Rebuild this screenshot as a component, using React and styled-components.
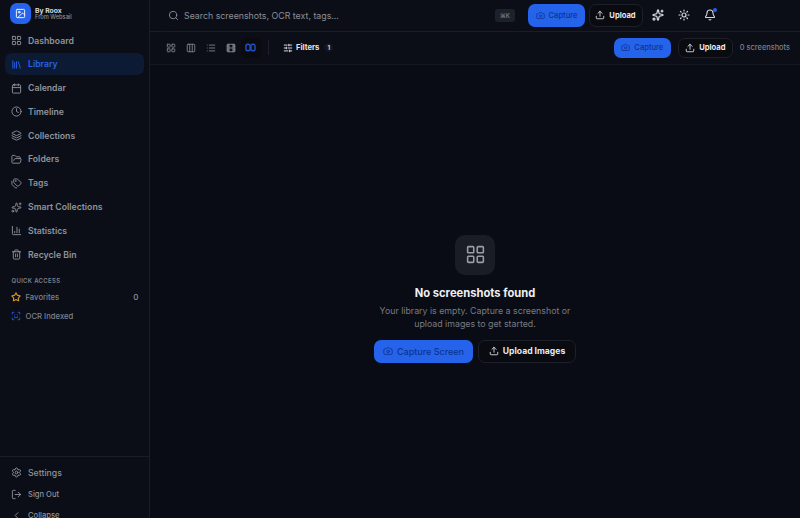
import React from "react";
import styled, { createGlobalStyle } from "styled-components";
import {
  LayoutGrid, Library, Calendar, Clock, Layers, FolderOpen, Tags, Sparkles, ChartColumn, Trash2,
  Star, ScanFace, Settings, LogOut, ChevronLeft, Search, Camera, Upload, Sun, Bell, Columns3,
  List, Film, SlidersHorizontal, Image as ImageIcon,
} from "lucide-react";

const Global = createGlobalStyle`
  html, body { margin: 0; padding: 0; height: 100%; background: #090c14; }
  #root { height: 100%; }
  * { box-sizing: border-box; }
`;

const Shell = styled.div`
  width: 800px; height: 518px; display: flex; overflow: hidden;
  background: #090c14; color: #fff;
  font-family: Inter, "Liberation Sans", sans-serif;
`;
const Sidebar = styled.aside`
  width: 150px; flex: none; height: 518px; display: flex; flex-direction: column;
  background: #0b0e17; border-right: 1px solid #1a1d26; overflow: hidden;
`;
const Brand = styled.div`
  height: 27px; flex: none; display: flex; align-items: center; gap: 4px; padding: 0 10px;
`;
const Logo = styled.div`
  width: 21px; height: 21px; border-radius: 7px; background: #2563eb; display: flex;
  align-items: center; justify-content: center; color: #fff;
`;
const BrandText = styled.div`display: flex; flex-direction: column;`;
const BrandName = styled.div`font-size: 6.8px; font-weight: 700; line-height: 7.5px; color: #d8dade;`;
const BrandSub = styled.div`font-size: 5.7px; font-weight: 500; line-height: 6.5px; color: #8b8f98;`;
const Nav = styled.nav`display: flex; flex-direction: column; gap: 1.8px; padding: 0 5px; margin-top: 2.5px;`;
const NavItem = styled.div`
  height: 22px; display: flex; align-items: center; gap: 6px; padding: 0 6px; border-radius: 7px;
  font-size: 8.7px; font-weight: 600; color: ${p => p.$active ? "#2563eb" : "#8f939c"};
  background: ${p => p.$active ? "#0d1a33" : "transparent"};
`;
const QuickTitle = styled.div`
  font-size: 6px; font-weight: 600; letter-spacing: .3px; color: #7d818b;
  padding: 0 11.5px; margin-top: 11px; margin-bottom: 3px; line-height: 8px;
`;
const QuickItem = styled.div`
  height: 19px; display: flex; align-items: center; gap: 5px; padding: 0 10.5px;
  font-size: 7.7px; font-weight: 500; color: #7d818b;
`;
const Count = styled.span`margin-left: auto; color: #8f939c; font-size: 8px;`;
const Spacer = styled.div`flex: 1;`;
const Footer = styled.div`
  flex: none; height: 62px; border-top: 1px solid #1a1d26; padding: 5px 5px 0; display: flex; flex-direction: column;
`;
const FootItem = styled.div`
  height: 21.5px; flex: none; display: flex; align-items: center; gap: 6px; padding: 0 6px;
  font-size: ${p => p.$small ? "7.6px" : "8.7px"}; font-weight: 500; color: #8f939c;
`;
const Main = styled.main`flex: 1; min-width: 0; display: flex; flex-direction: column;`;
const Header = styled.header`
  height: 31.5px; flex: none; display: flex; align-items: center; padding: 0 12px;
  background: #0b0e17; border-bottom: 1px solid #1a1d26;
`;
const SearchBox = styled.div`
  width: 358px; height: 26px; flex: none; display: flex; align-items: center; gap: 5px; padding: 0 5px 0 6px;
  background: #0b0e17; border-radius: 8px; color: #8a8e97; font-size: 8.8px;
`;
const Kbd = styled.span`
  margin-left: auto; width: 20px; height: 13px; border-radius: 3px; background: #1e2129; color: #71757f;
  font-size: 6px; font-weight: 600; display: flex; align-items: center; justify-content: center;
`;
const Btn = styled.button`
  height: ${p => p.$big ? "22.5px" : "20.5px"}; padding: 0; display: inline-flex; align-items: center; justify-content: center; gap: 4px;
  width: ${p => p.$w}px; flex: none; border-radius: 7px; font-family: inherit;
  font-size: ${p => p.$big ? (p.$primary ? "9px" : "8.6px") : "7.6px"};
  font-weight: ${p => p.$primary ? 500 : 700};
  background: ${p => p.$primary ? "#2563eb" : "#090b11"};
  color: ${p => p.$primary ? "#0d3491" : "#e8eaee"};
  border: ${p => p.$primary ? "none" : "1px solid #1d2028"};
`;
const TopActions = styled.div`display: flex; align-items: center; gap: 3.5px; margin-left: 8px;`;
const TopCapture = styled(Btn)`height: 23px;`;
const TopUpload = styled(Btn)`height: 23px;`;
const IconBtn = styled.div`
  width: 22px; height: 22px; margin-left: 0.5px; position: relative; display: flex; align-items: center; justify-content: center; color: #d3d5da;
`;
const Dot = styled.span`
  position: absolute; top: 3.5px; right: 4px; width: 4px; height: 4px; border-radius: 50%; background: #2563eb;
`;
const Toolbar = styled.div`
  height: 33.5px; flex: none; display: flex; align-items: center; padding: 0 10px 0 10.5px;
  background: #0b0e17; border-bottom: 1px solid #14171f;
`;
const ViewBtn = styled.div`
  width: 20px; height: 20px; flex: none; border-radius: 5px; display: flex; align-items: center; justify-content: center;
  color: ${p => p.$active ? "#2450c8" : "#7d818b"};
  background: ${p => p.$active ? "#090b11" : "transparent"};
`;
const Views = styled.div`display: flex;`;
const Divider = styled.div`width: 1px; height: 15px; background: #1d2028; margin: 0 14px 0 7.5px;`;
const Filters = styled.div`display: flex; align-items: center; gap: 3px; color: #e5e7eb; font-size: 7.6px; font-weight: 700;`;
const Badge = styled.span`
  width: 9px; height: 9px; border-radius: 50%; background: #14171f; color: #d5d7dc; font-size: 6px; margin-left: 2px;
  display: flex; align-items: center; justify-content: center;
`;
const ToolRight = styled.div`margin-left: auto; display: flex; align-items: center; gap: 7px;`;
const Total = styled.span`font-size: 7.4px; color: #7d818b; font-weight: 500;`;
const Empty = styled.section`
  flex: 1; display: flex; flex-direction: column; align-items: center; padding-top: 169.5px; background: #090c14;
`;
const EmptyIcon = styled.div`
  width: 40px; height: 40px; border-radius: 10px; background: #1a1d25; color: #9a9da5; display: flex;
  align-items: center; justify-content: center;
`;
const EmptyTitle = styled.h2`margin: 11.5px 0 0; font-size: 11.2px; line-height: 14px; font-weight: 700; color: #eef0f3;`;
const EmptyText = styled.p`
  margin: 5px 0 0; font-size: 8.8px; line-height: 12.5px; font-weight: 400; color: #777b85; text-align: center;
`;
const EmptyActions = styled.div`display: flex; gap: 5px; margin-top: 10px;`;
const SvgIcon = styled.svg`display: block;`;

const TwinPanes = () => (
  <SvgIcon width="11" height="11" viewBox="0 0 24 24" fill="none" stroke="currentColor" strokeWidth="3">
    <rect x="2" y="5" width="9" height="14" rx="4" />
    <rect x="13" y="5" width="9" height="14" rx="4" />
  </SvgIcon>
);

const items = [
  ["Dashboard", LayoutGrid], ["Library", Library, true], ["Calendar", Calendar], ["Timeline", Clock],
  ["Collections", Layers], ["Folders", FolderOpen], ["Tags", Tags], ["Smart Collections", Sparkles],
  ["Statistics", ChartColumn], ["Recycle Bin", Trash2],
];

export default function App() {
  return (
    <Shell>
      <Global />
      <Sidebar>
        <Brand>
          <Logo><ImageIcon size={11} strokeWidth={2} /></Logo>
          <BrandText>
            <BrandName>By Roox</BrandName>
            <BrandSub>From Websail</BrandSub>
          </BrandText>
        </Brand>
        <Nav>
          {items.map(([label, Icon, active]) => (
            <NavItem key={label} $active={active}>
              <Icon size={11} strokeWidth={2} />
              {label}
            </NavItem>
          ))}
        </Nav>
        <QuickTitle>QUICK ACCESS</QuickTitle>
        <QuickItem><Star size={10} color="#e09417" strokeWidth={2.6} />Favorites<Count>0</Count></QuickItem>
        <QuickItem><ScanFace size={10} color="#2450c8" strokeWidth={2.6} />OCR Indexed</QuickItem>
        <Spacer />
        <Footer>
          <FootItem><Settings size={11} />Settings</FootItem>
          <FootItem $small><LogOut size={11} />Sign Out</FootItem>
          <FootItem $small><ChevronLeft size={11} />Collapse</FootItem>
        </Footer>
      </Sidebar>
      <Main>
        <Header>
          <SearchBox>
            <Search size={11} strokeWidth={2} />
            Search screenshots, OCR text, tags...
            <Kbd>⌘K</Kbd>
          </SearchBox>
          <TopActions>
            <TopCapture $primary $w={57}><Camera size={9} />Capture</TopCapture>
            <TopUpload $w={54}><Upload size={10} />Upload</TopUpload>
            <IconBtn><Sparkles size={12} strokeWidth={2.5} /></IconBtn>
            <IconBtn><Sun size={12} strokeWidth={2.4} /></IconBtn>
            <IconBtn><Bell size={12} strokeWidth={2.2} /><Dot /></IconBtn>
          </TopActions>
        </Header>
        <Toolbar>
          <Views>
            <ViewBtn><LayoutGrid size={10} strokeWidth={2.2} /></ViewBtn>
            <ViewBtn><Columns3 size={10} strokeWidth={2.2} /></ViewBtn>
            <ViewBtn><List size={10} strokeWidth={2.2} /></ViewBtn>
            <ViewBtn><Film size={10} strokeWidth={2.6} /></ViewBtn>
            <ViewBtn $active><TwinPanes /></ViewBtn>
          </Views>
          <Divider />
          <Filters><SlidersHorizontal size={10} strokeWidth={2.2} />Filters<Badge>1</Badge></Filters>
          <ToolRight>
            <Btn $primary $w={57}><Camera size={9} />Capture</Btn>
            <Btn $w={55}><Upload size={10} />Upload</Btn>
            <Total>0 screenshots</Total>
          </ToolRight>
        </Toolbar>
        <Empty>
          <EmptyIcon><LayoutGrid size={21} strokeWidth={1.8} /></EmptyIcon>
          <EmptyTitle>No screenshots found</EmptyTitle>
          <EmptyText>Your library is empty. Capture a screenshot or<br />upload images to get started.</EmptyText>
          <EmptyActions>
            <Btn $primary $big $w={99}><Camera size={10} />Capture Screen</Btn>
            <Btn $big $w={98}><Upload size={10} />Upload Images</Btn>
          </EmptyActions>
        </Empty>
      </Main>
    </Shell>
  );
}
